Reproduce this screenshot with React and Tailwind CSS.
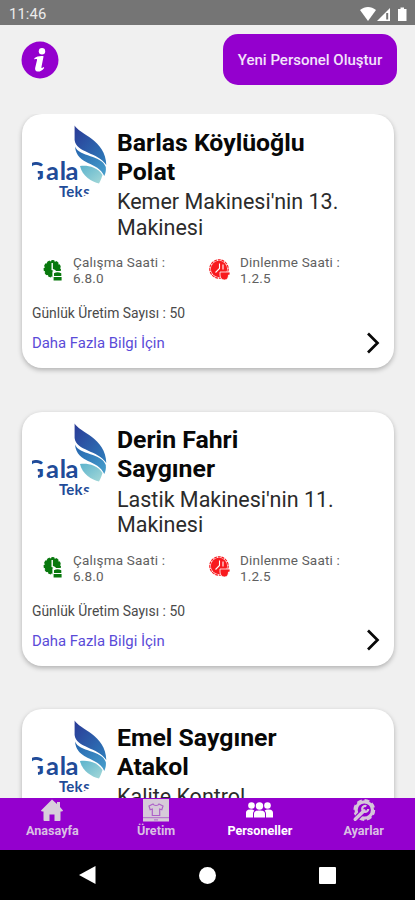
import React from "react";

const people = [
  { id: 1, name: ["Barlas Köylüoğlu", "Polat"], job: ["Kemer Makinesi'nin 13.", "Makinesi"] },
  { id: 2, name: ["Derin Fahri", "Saygıner"], job: ["Lastik Makinesi'nin 11.", "Makinesi"] },
  { id: 3, name: ["Emel Saygıner", "Atakol"], job: ["Kalite Kontrol"] },
];

function InfoIcon() {
  return (
    <svg width="38" height="38" viewBox="0 0 38 38">
      <circle cx="19" cy="19" r="18.5" fill="#9400ce" />
      <circle cx="21" cy="10.2" r="3.2" fill="#fff" />
      <path
        d="M13.3 17.2C15.8 15.4 19 14.8 22.6 15.2L20.4 26.2C20.2 27.4 21.2 27 22.8 25.9L23.2 27C21 29.8 18.8 30.8 16.6 30.6C14.4 30.4 13.8 28.6 14.2 26.8L16 19.2C16.2 17.8 15.2 17.9 13.5 18.5Z"
        fill="#fff"
      />
    </svg>
  );
}

function Logo({ id }) {
  return (
    <svg width="76" height="76" viewBox="0 0 76 76" className="block shrink-0">
      <defs>
        <clipPath id={`round-${id}`}>
          <path d="M0 0H76V50C73 58 66 64 61 67L49 74C46 76 42 76 38 76C24 76 10 69 6 56L5.5 43H0Z" />
        </clipPath>
        <linearGradient id={`top-${id}`} x1="0" y1="0" x2="1" y2="1">
          <stop offset="0" stopColor="#2a3a96" />
          <stop offset="1" stopColor="#2d7dbb" />
        </linearGradient>
        <linearGradient id={`mid-${id}`} x1="0" y1="0" x2="1" y2="1">
          <stop offset="0" stopColor="#2463ae" />
          <stop offset="1" stopColor="#479fcc" />
        </linearGradient>
        <linearGradient id={`low-${id}`} x1="0" y1="0" x2="1" y2="1">
          <stop offset="0" stopColor="#5cb3cd" />
          <stop offset="1" stopColor="#a5d9d8" />
        </linearGradient>
      </defs>
      <g clipPath={`url(#round-${id})`}>
        <path d="M42.6 1.5C47 10 74 16 74.3 41C66 28 44 29 42.6 16Z" fill={`url(#top-${id})`} />
        <path d="M43 22.5C47 33 70 31 73.8 43C74.2 47 73.5 49 72.3 52C66 37 45 42 43 22.5Z" fill={`url(#mid-${id})`} />
        <path d="M48 42C54 41 65 42 70.5 51C69.5 54 68.5 57 67 59.5C60 58 50 52 48 42Z" fill={`url(#low-${id})`} />
        <text x="-6.5 14 27.8 33.6" y="55.5" fontSize="25.5" fontWeight="700" fill="#214b98" className="font-['Lato',sans-serif]">
          Gala
        </text>
        <text x="27 34.2 42.6 51.2" y="73" fontSize="15" fontWeight="700" fill="#214b98" className="font-['Lato',sans-serif]">
          Teks
        </text>
      </g>
    </svg>
  );
}

function WorkIcon() {
  return (
    <svg width="20" height="22" viewBox="0 0 20 22" className="block">
      <circle cx="9.3" cy="9.8" r="7.9" fill="#08780d" stroke="#08780d" strokeWidth="1.6" strokeDasharray="3 1.5" />
      <path d="M9.2 4V10.5L12.5 12" stroke="#fff" strokeWidth="1.4" fill="none" />
      <rect x="9.4" y="12" width="10" height="9.8" rx="1" fill="#fff" />
      <path d="M11 14.2Q14.5 12.4 18.3 14.2V17H11ZM10.6 18H18.6V21.6H10.6Z" fill="#08780d" />
    </svg>
  );
}

function RestIcon() {
  return (
    <svg width="22" height="22" viewBox="0 0 22 22" className="block">
      <circle cx="10" cy="10" r="9.2" fill="none" stroke="#f8191e" strokeWidth="1.2" strokeDasharray="3 0.8" />
      <circle cx="10" cy="10" r="8.2" fill="#f8191e" />
      <path d="M10.5 4.5V9.5L6.5 13.5M14 5.5V10.5" stroke="#fff" strokeWidth="1.1" fill="none" />
      <path d="M11 13H21V16H19.5C19.5 19 18 21 15.5 21S11 19 11 16Z" fill="#f8191e" stroke="#fff" strokeWidth="0.8" />
    </svg>
  );
}

function PersonCard({ person }) {
  return (
    <div className="h-[254px] shrink-0 rounded-[20px] bg-white pl-[10px] pt-[10px] shadow-[0_2px_5px_rgba(0,0,0,0.27)]">
      <div className="flex h-[130px]">
        <Logo id={person.id} />
        <div className="ml-[9px] whitespace-nowrap pt-[3.5px]">
          <h2 className="text-[24.8px] font-bold leading-[29px] text-[#080808]">
            {person.name[0]}
            <br />
            {person.name[1]}
          </h2>
          <p className="mt-[3.5px] text-[21.5px] leading-[25.5px] text-[#2b2b2b]">
            {person.job.map((line) => (
              <span key={line} className="block">{line}</span>
            ))}
          </p>
        </div>
      </div>
      <div className="flex h-[47px] text-[13.5px] leading-[16px] tracking-[0.2px] text-[#606060]">
        <div className="flex w-[166px] pl-[11px]">
          <div className="w-[30px] pt-[4.5px]"><WorkIcon /></div>
          <div>Çalışma Saati :<br />6.8.0</div>
        </div>
        <div className="flex">
          <div className="w-[42px] pl-[11px] pt-[4.5px]"><RestIcon /></div>
          <div>Dinlenme Saati :<br />1.2.5</div>
        </div>
      </div>
      <div className="flex justify-between pr-[14px]">
        <div>
          <p className="pt-[2px] text-[13.9px] leading-[20px] text-[#4a4a4a]">Günlük Üretim Sayısı : 50</p>
          <p className="mt-[10px] text-[14.9px] leading-[20px] text-[#5a4bd8]">Daha Fazla Bilgi İçin</p>
        </div>
        <svg width="14" height="22" viewBox="0 0 14 22" className="mt-[30.5px]">
          <path d="M2 1.5L11.5 11L2 20.5" stroke="#080808" strokeWidth="2.7" fill="none" />
        </svg>
      </div>
    </div>
  );
}

function HomeIcon() {
  return (
    <svg width="24" height="23" viewBox="0 0 24 23">
      <path d="M12 0.5L17 5V3H20V8L23 11.5Q23 12.8 20.5 12.5V21Q20.5 22 19.5 22H14.5V15.5H9.5V22H4.5Q3.5 22 3.5 21V12.5Q1 12.8 1 11.5Z" fill="#d8cedb" />
    </svg>
  );
}

function ShirtIcon() {
  return (
    <svg width="26" height="23" viewBox="0 0 26 23">
      <path d="M0 0H26V22.5H0Z" fill="#d6cad9" />
      <path d="M10 5L6 7L7.2 10.7L9.3 10V16.5H16.7V10L18.8 10.7L20 7L16 5C15 7 11 7 10 5Z" fill="none" stroke="#ad60c8" strokeWidth="1.2" />
      <path d="M0 18.7H26M11 20.9H15" stroke="#ad60c8" strokeWidth="0.9" />
    </svg>
  );
}

function PeopleIcon() {
  return (
    <svg width="27" height="23" viewBox="0 0 27 23" fill="#fff">
      <circle cx="5.5" cy="6.5" r="3.3" />
      <circle cx="21.5" cy="6.5" r="3.3" />
      <circle cx="13.5" cy="7" r="3.7" />
      <path d="M0 18.5V14C0 11 2 10.4 5 10.4C6.8 10.4 8 11 8.3 11.8C7.3 12.6 7 13.6 7 15V18.5ZM27 18.5V14C27 11 25 10.4 22 10.4C20.2 10.4 19 11 18.7 11.8C19.7 12.6 20 13.6 20 15V18.5ZM8 18.5V15C8 12.2 10 11.5 13.5 11.5S19 12.2 19 15V18.5Z" />
    </svg>
  );
}

function GearIcon() {
  return (
    <svg width="24" height="23" viewBox="0 0 24 23" fill="none" stroke="#d5c6da">
      <circle cx="12.3" cy="11" r="8.2" strokeWidth="3.2" />
      <circle cx="12.3" cy="11" r="10" strokeWidth="1.8" strokeDasharray="5 2.85" />
      <path d="M0.5 19.5L6.5 13L10.5 17L5 23Z" fill="#9400ce" stroke="none" />
      <path d="M3.2 20.3L12 11.7" strokeWidth="3.4" strokeLinecap="round" />
      <path d="M14.4 7.2A3 3 0 1 0 16.2 10" strokeWidth="2.2" />
    </svg>
  );
}

const tabs = [
  { label: "Anasayfa", Icon: HomeIcon },
  { label: "Üretim", Icon: ShirtIcon },
  { label: "Personeller", Icon: PeopleIcon, active: true },
  { label: "Ayarlar", Icon: GearIcon },
];

export default function App() {
  return (
    <div className="flex h-[900px] w-[415px] flex-col overflow-hidden bg-[#f0f0f0] font-['Roboto',sans-serif]">
      <div className="flex h-[25px] shrink-0 items-center justify-between bg-[#757575] pl-[9px] pr-[7px] pt-[3px] text-[#ececec]">
        <span className="text-[14.8px] tracking-[0.1px]">11:46</span>
        <svg width="48" height="15" viewBox="0 0 48 15" fill="#fff">
          <path d="M0 3C5 -1 11 -1 16 3L8 14Z" />
          <path d="M17 14L30 1V14Z" />
          <path d="M27.2 6V12.5" stroke="#757575" strokeWidth="2" />
          <path d="M38 2H40.5V0.5H44V2H46.5V14H38Z" />
        </svg>
      </div>

      <header className="flex h-[89px] shrink-0 items-start justify-between pl-[21px] pr-[18px] pt-[9px]">
        <div className="pt-[7px]"><InfoIcon /></div>
        <button className="h-[51px] w-[174px] rounded-[15px] bg-[#9400ce] pt-[2px] text-[15px] font-medium text-[#f3e3fa]">
          Yeni Personel Oluştur
        </button>
      </header>

      <main className="flex min-h-0 flex-1 flex-col gap-[43.5px] overflow-hidden pl-[22px] pr-[21px]">
        {people.map((p) => (
          <PersonCard key={p.id} person={p} />
        ))}
      </main>

      <nav className="grid h-[52px] shrink-0 grid-cols-4 bg-[#9400ce]">
        {tabs.map(({ label, Icon, active }) => (
          <div key={label} className={`flex flex-col items-center pl-px pt-px text-[12.6px] font-bold leading-[18px] ${active ? "text-white" : "text-[#d9bfe3]"}`}>
            <Icon />
            <span>{label}</span>
          </div>
        ))}
      </nav>

      <div className="flex h-[50px] shrink-0 items-center justify-between bg-black pl-[79px] pr-[79px]">
        <svg width="17" height="18" viewBox="0 0 17 18"><path d="M0 9L16.5 0V18Z" fill="#fff" /></svg>
        <span className="h-[17px] w-[17px] rounded-full bg-white" />
        <span className="h-[17px] w-[17px] rounded-[1px] bg-white" />
      </div>
    </div>
  );
}
